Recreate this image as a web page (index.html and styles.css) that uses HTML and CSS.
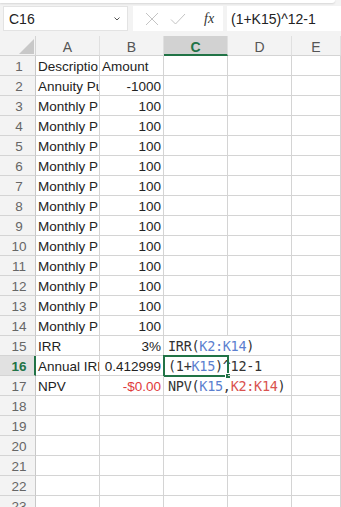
FILE: index.html
```html
<!DOCTYPE html>
<html>
<head>
<meta charset="utf-8">
<link rel="stylesheet" href="styles.css">
</head>
<body>
<div class="app">
  <div class="ribbon-edge"></div>
  <div class="fbar">
    <div class="namebox"><span>C16</span><svg class="chev" width="8" height="6" viewBox="0 0 8 6"><path d="M1.5 1.5 L4 4 L6.5 1.5" fill="none" stroke="#555" stroke-width="1"/></svg></div>
    <div class="fxbox">
      <svg width="16" height="16" viewBox="0 0 16 16"><path d="M2 2 L14 14 M14 2 L2 14" stroke="#c4c4c4" stroke-width="1"/></svg>
      <svg width="18" height="16" viewBox="0 0 18 16"><path d="M2 8.5 L6.5 13 L16 3" fill="none" stroke="#c4c4c4" stroke-width="1"/></svg>
      <span class="fx">fx</span>
    </div>
    <div class="finput">(1+K15)^12-1</div>
  </div>
  <div class="sheet">
    <div class="corner"><span class="tri"></span></div>
    <div class="ch">A</div><div class="ch">B</div><div class="ch sel">C</div><div class="ch">D</div><div class="ch">E</div>

    <div class="rh">1</div><div class="c">Descriptio</div><div class="c">Amount</div><div class="c"></div><div class="c"></div><div class="c"></div>
    <div class="rh">2</div><div class="c">Annuity Pu</div><div class="c r">-1000</div><div class="c"></div><div class="c"></div><div class="c"></div>
    <div class="rh">3</div><div class="c">Monthly P</div><div class="c r">100</div><div class="c"></div><div class="c"></div><div class="c"></div>
    <div class="rh">4</div><div class="c">Monthly P</div><div class="c r">100</div><div class="c"></div><div class="c"></div><div class="c"></div>
    <div class="rh">5</div><div class="c">Monthly P</div><div class="c r">100</div><div class="c"></div><div class="c"></div><div class="c"></div>
    <div class="rh">6</div><div class="c">Monthly P</div><div class="c r">100</div><div class="c"></div><div class="c"></div><div class="c"></div>
    <div class="rh">7</div><div class="c">Monthly P</div><div class="c r">100</div><div class="c"></div><div class="c"></div><div class="c"></div>
    <div class="rh">8</div><div class="c">Monthly P</div><div class="c r">100</div><div class="c"></div><div class="c"></div><div class="c"></div>
    <div class="rh">9</div><div class="c">Monthly P</div><div class="c r">100</div><div class="c"></div><div class="c"></div><div class="c"></div>
    <div class="rh">10</div><div class="c">Monthly P</div><div class="c r">100</div><div class="c"></div><div class="c"></div><div class="c"></div>
    <div class="rh">11</div><div class="c">Monthly P</div><div class="c r">100</div><div class="c"></div><div class="c"></div><div class="c"></div>
    <div class="rh">12</div><div class="c">Monthly P</div><div class="c r">100</div><div class="c"></div><div class="c"></div><div class="c"></div>
    <div class="rh">13</div><div class="c">Monthly P</div><div class="c r">100</div><div class="c"></div><div class="c"></div><div class="c"></div>
    <div class="rh">14</div><div class="c">Monthly P</div><div class="c r">100</div><div class="c"></div><div class="c"></div><div class="c"></div>
    <div class="rh">15</div><div class="c">IRR</div><div class="c r">3%</div><div class="c f">IRR(<span class="blue">K2:K14</span>)</div><div class="c"></div><div class="c"></div>
    <div class="rh rsel">16</div><div class="c">Annual IRF</div><div class="c r">0.412999</div><div class="c f active">(1+<span class="blue">K15</span>)^12-1<span class="selbox"><span class="handle"></span></span></div><div class="c"></div><div class="c"></div>
    <div class="rh">17</div><div class="c">NPV</div><div class="c r red">-$0.00</div><div class="c f">NPV(<span class="blue">K15</span>,<span class="redref">K2:K14</span>)</div><div class="c"></div><div class="c"></div>
    <div class="rh">18</div><div class="c"></div><div class="c"></div><div class="c"></div><div class="c"></div><div class="c"></div>
    <div class="rh">19</div><div class="c"></div><div class="c"></div><div class="c"></div><div class="c"></div><div class="c"></div>
    <div class="rh">20</div><div class="c"></div><div class="c"></div><div class="c"></div><div class="c"></div><div class="c"></div>
    <div class="rh">21</div><div class="c"></div><div class="c"></div><div class="c"></div><div class="c"></div><div class="c"></div>
    <div class="rh">22</div><div class="c"></div><div class="c"></div><div class="c"></div><div class="c"></div><div class="c"></div>
    <div class="rh">23</div><div class="c"></div><div class="c"></div><div class="c"></div><div class="c"></div><div class="c"></div>
  </div>
</div>
</body>
</html>
```
FILE: styles.css
```css
* { box-sizing: border-box; }
html, body { margin: 0; padding: 0; }
body {
  width: 341px;
  height: 507px;
  overflow: hidden;
  background: #f3f3f3;
  font-family: "Liberation Sans", Arial, sans-serif;
  color: #222;
}
.app { width: 341px; }
.ribbon-edge {
  height: 3px;
  margin-right: 6px;
  background: #fff;
  border-bottom-right-radius: 4px;
  box-shadow: 0 1px 2px rgba(0,0,0,0.12);
}
.fbar {
  display: flex;
  align-items: stretch;
  height: 25px;
  margin-top: 3px;
  padding-left: 3px;
  gap: 5px;
}
.namebox {
  width: 125px;
  background: #fff;
  border: 1px solid #e3e3e3;
  display: flex;
  align-items: center;
  justify-content: space-between;
  padding: 0 6px 0 5px;
  font-size: 14px;
  color: #222;
}
.namebox span { padding-top: 1px; }
.chev { margin-top: 1px; }
.fxbox {
  width: 90px;
  background: #fff;
  display: flex;
  align-items: center;
  padding-left: 11px;
  gap: 9px;
}
.fx {
  font-family: "Liberation Serif", "Times New Roman", serif;
  font-style: italic;
  font-size: 14px;
  color: #333;
  margin-left: 8px;
}
.finput {
  flex: 1;
  background: #fff;
  margin-left: -1px;
  display: flex;
  align-items: center;
  padding-left: 4px;
  padding-top: 1px;
  font-size: 14px;
  color: #222;
}
.sheet {
  margin-top: 5px;
  display: grid;
  grid-template-columns: 36px 64px 64px 64px 64px 1fr;
  grid-template-rows: 20px;
  grid-auto-rows: 20px;
  background: #fff;
}
.corner {
  background: #f3f3f3;
  border-right: 1px solid #d4d4d4;
  border-bottom: 1px solid #d4d4d4;
  position: relative;
}
.tri {
  position: absolute;
  right: 1px;
  bottom: 1px;
  width: 0;
  height: 0;
  border-left: 15px solid transparent;
  border-bottom: 15px solid #c8c8c8;
}
.ch {
  background: #f3f3f3;
  border-right: 1px solid #e0e0e0;
  border-bottom: 1px solid #d4d4d4;
  display: flex;
  align-items: center;
  justify-content: center;
  font-size: 14px;
  color: #555;
  padding-top: 2px;
}
.ch.sel {
  background: #d2d2d2;
  color: #217346;
  font-weight: bold;
  border-bottom: 2px solid #217346;
  padding-top: 3px;
}
.rh {
  background: #f3f3f3;
  border-right: 1px solid #c8c8c8;
  border-bottom: 1px solid #d4d4d4;
  display: flex;
  align-items: flex-end;
  justify-content: center;
  font-size: 13.5px;
  color: #666;
  padding-bottom: 1px;
  padding-left: 3px;
}
.rh.rsel {
  background: #e1e1e1;
  color: #217346;
  font-weight: bold;
  border-right: 2px solid #217346;
  padding-left: 4px;
}
.c {
  border-right: 1px solid #d4d4d4;
  border-bottom: 1px solid #d4d4d4;
  font-size: 13.5px;
  color: #222;
  white-space: nowrap;
  overflow: hidden;
  padding: 0 2px 1px 2px;
  display: flex;
  align-items: flex-end;
  position: relative;
}
.c.r { justify-content: flex-end; }
.c.red { color: #e03b3b; }
.c.f {
  overflow: visible;
  border-right-color: transparent;
  font-family: "DejaVu Sans Mono", "Liberation Mono", monospace;
  font-size: 13.5px;
  letter-spacing: -0.3px;
  padding-left: 4px;
  color: #333;
  padding-bottom: 1px;
}
.blue { color: #5c7fcf; }
.redref { color: #d9534f; }
.selbox {
  position: absolute;
  left: -1px;
  top: -1px;
  width: 66px;
  height: 22px;
  border: 2px solid #217346;
}
.handle {
  position: absolute;
  right: -4px;
  bottom: -4px;
  width: 6px;
  height: 6px;
  background: #217346;
  border: 1px solid #fff;
}
```
